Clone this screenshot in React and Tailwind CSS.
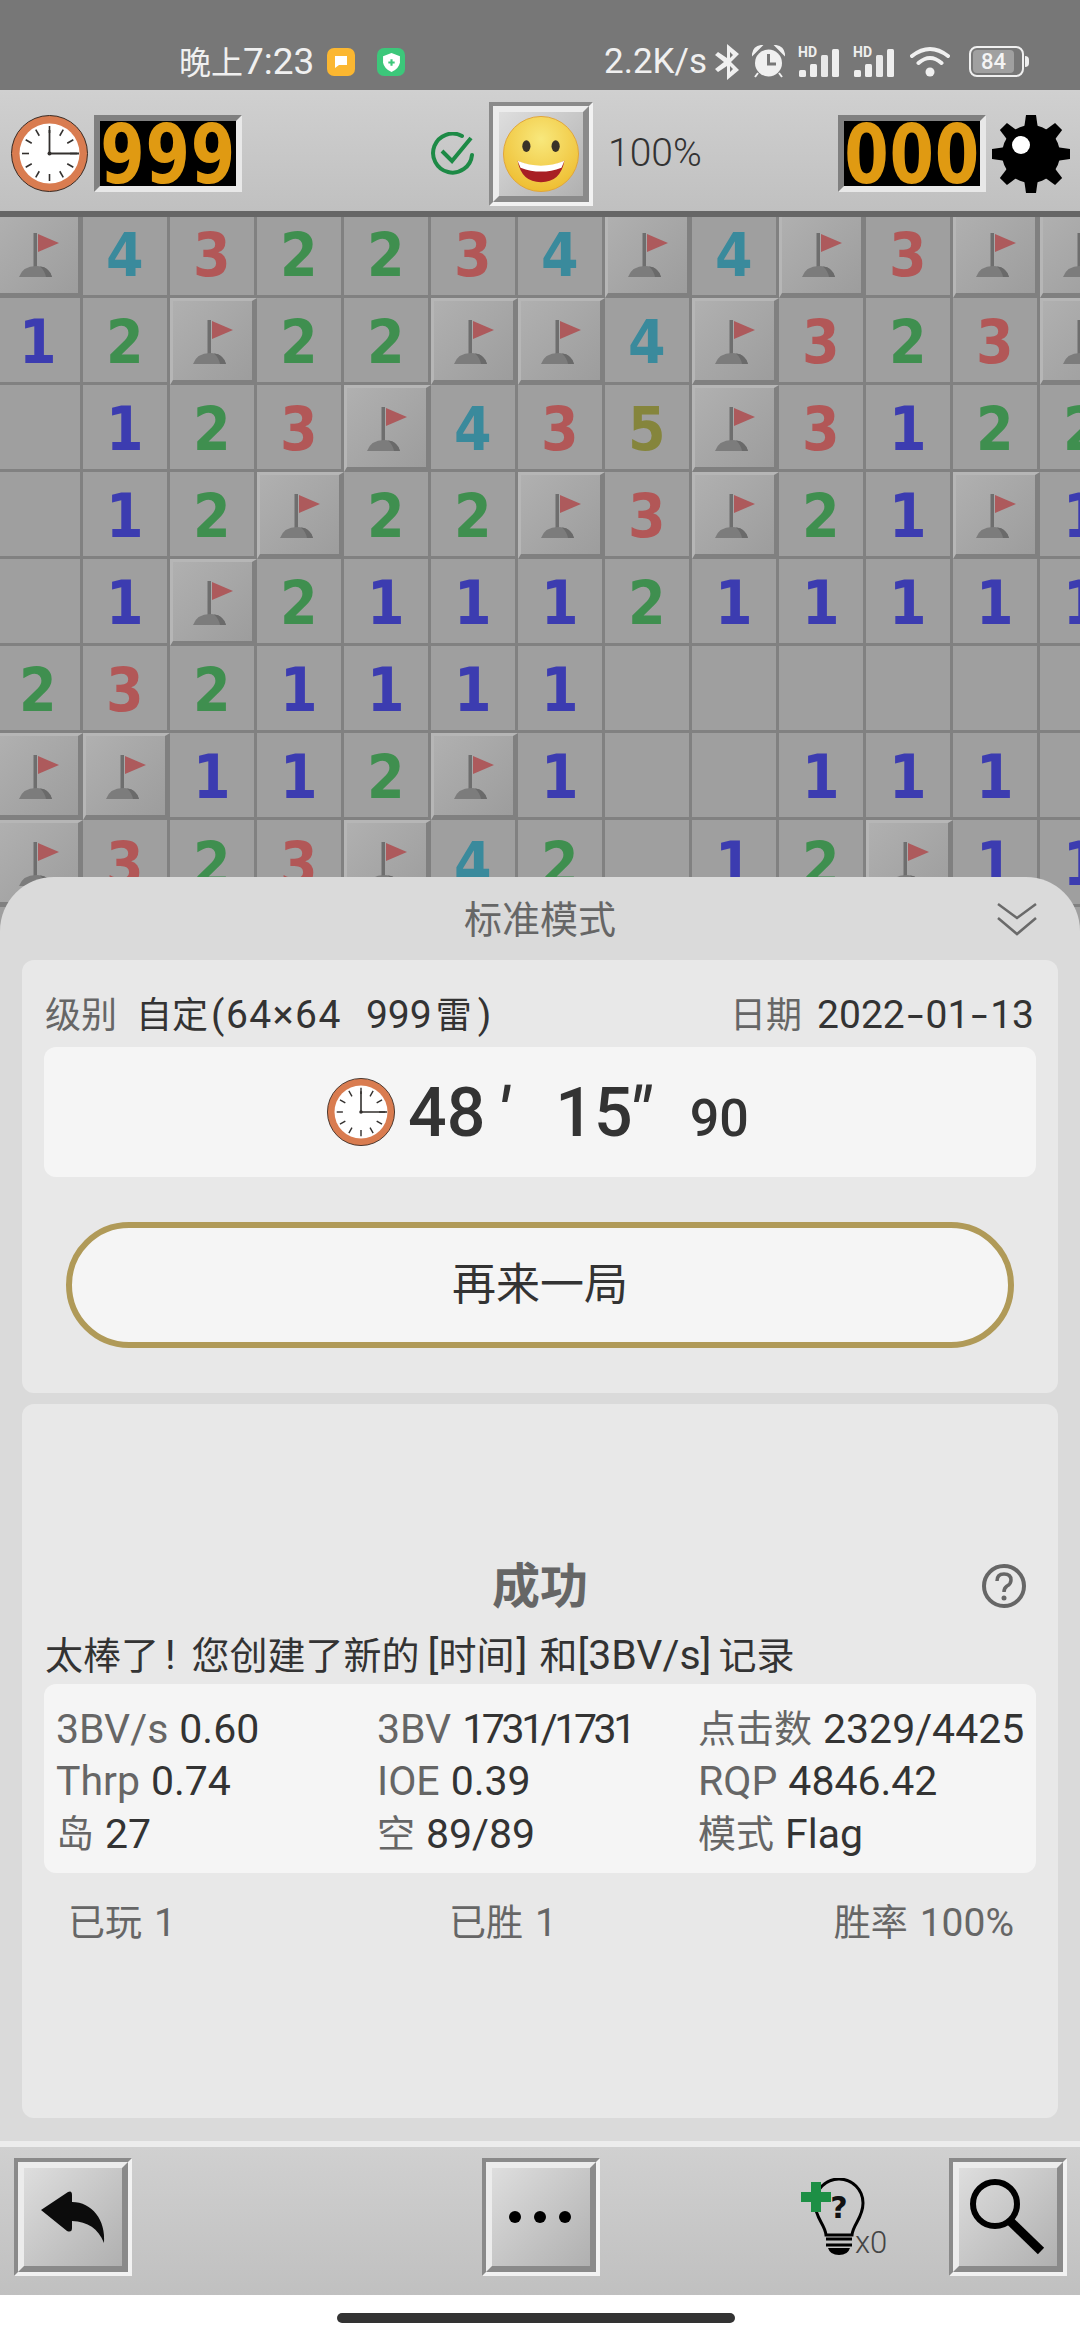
import React from 'react';

const rows = [
  'F432234F4F3FF',
  '12F22FF4F323F',
  ' 123F435F3122',
  ' 12F22F3F21F1',
  ' 1F2111211111',
  '2321111      ',
  'FF112F1  111 ',
  'F323F42 12F11',
  '             ',
];

const numColor = {
  1: 'text-[#3c3cb0]',
  2: 'text-[#3f8f4f]',
  3: 'text-[#b25757]',
  4: 'text-[#3a8a9c]',
  5: 'text-[#85853c]',
};

function Flag() {
  return (
    <svg viewBox="0 0 87 87" className="absolute left-[-3px] top-[-3px] w-[87px] h-[87px]">
      <rect x="37.5" y="22" width="3.5" height="35" fill="#6e6e6e" />
      <path d="M42 23 L63 32 L42 41 Z" fill="#ad5a5c" />
      <path d="M23 66 Q27 55 40 55 Q53 55 56 66 Z" fill="#7c7c7c" />
      <path d="M44 55.5 Q53 56 56 66 H50 Q49 60 44 55.5 Z" fill="#6a6a6a" />
    </svg>
  );
}

function Cell({ v }) {
  if (v === 'F') {
    return (
      <div className="relative w-[87px] h-[87px] bg-gradient-to-br from-[#b0b0b0] to-[#9d9d9d] border-t-[3px] border-l-[3px] border-r-[5px] border-b-[5px] border-t-[#b6b6b6] border-l-[#b6b6b6] border-r-[#808080] border-b-[#808080]">
        <Flag />
      </div>
    );
  }
  return (
    <div className={`w-[87px] h-[87px] pt-[3px] bg-[#9f9f9f] border-r-[3px] border-b-[3px] border-[#818181] flex items-center justify-center font-['DejaVu_Sans',sans-serif] font-bold text-[60px] leading-none ${numColor[v] || ''}`}>
      <span className="scale-x-90">{v === ' ' ? '' : v}</span>
    </div>
  );
}

function Clock({ size }) {
  const ticks = [];
  for (let i = 0; i < 12; i++) {
    ticks.push(<line key={i} x1="38.5" y1="11" x2="38.5" y2="18" stroke="#33302e" strokeWidth="1.6" transform={`rotate(${i * 30} 38.5 38.5)`} />);
  }
  return (
    <svg viewBox="0 0 77 77" style={{ width: size, height: size }} className="shrink-0">
      <circle cx="38.5" cy="38.5" r="38" fill="#d97c50" stroke="#3a2a22" strokeWidth="1" />
      <circle cx="38.5" cy="38.5" r="30" fill="#ffffff" />
      {ticks}
      <path d="M38.5 38.5 V15 M38.5 38.5 H68" stroke="#33302e" strokeWidth="1.8" fill="none" />
      <circle cx="38.5" cy="38.5" r="2" fill="#33302e" />
    </svg>
  );
}

function Lcd({ text }) {
  return (
    <div className="w-[148px] h-[77px] shrink-0 pt-[3px] border-[6px] border-t-[#808080] border-l-[#808080] border-r-[#e8e8e8] border-b-[#e8e8e8] bg-black flex items-center justify-center">
      <span className="scale-x-[0.78] font-['DejaVu_Sans',sans-serif] font-bold text-[82px] leading-none text-[#e09a12] tracking-[1px]">{text}</span>
    </div>
  );
}

function Smile() {
  return (
    <svg viewBox="-40 -40 80 80" className="w-[78px] h-[78px]">
      <defs>
        <radialGradient id="face" cx="50%" cy="30%" r="75%">
          <stop offset="0" stopColor="#f8e87c" />
          <stop offset="1" stopColor="#eebb2c" />
        </radialGradient>
      </defs>
      <circle r="38.5" fill="url(#face)" stroke="#e0a53a" strokeWidth="1" />
      <ellipse cx="-15" cy="-8" rx="4.2" ry="6" fill="#3a3228" />
      <ellipse cx="15" cy="-8" rx="4.2" ry="6" fill="#3a3228" />
      <path d="M-24 7 Q0 19 24 7 Q20 29 0 29 Q-20 29 -24 7 Z" fill="#a81f24" />
      <path d="M-24 7 Q0 17 24 7 L21 14 Q0 22 -21 14 Z" fill="#ffffff" />
    </svg>
  );
}

function Gear() {
  const teeth = [0, 45, 90, 135, 180, 225, 270, 315];
  return (
    <svg viewBox="0 0 78 78" className="w-[78px] h-[78px] shrink-0">
      <circle cx="39" cy="39" r="29" fill="#000" />
      {teeth.map((a) => (
        <path key={a} d="M32 14 L34 0 H44 L46 14 Z" fill="#000" transform={`rotate(${a} 39 39)`} />
      ))}
      <circle cx="29" cy="30" r="9" fill="#fff" />
    </svg>
  );
}

function BevelButton({ size, children }) {
  return (
    <div className={`shrink-0 border-4 border-t-[#8a8a8a] border-l-[#8a8a8a] border-r-[#f2f2f2] border-b-[#f2f2f2] ${size}`}>
      <div className="w-full h-full border-[6px] border-t-[#ececec] border-l-[#ececec] border-r-[#8a8a8a] border-b-[#8a8a8a] bg-gradient-to-br from-[#dedede] to-[#b0b0b0] flex items-center justify-center">
        {children}
      </div>
    </div>
  );
}

function Signal() {
  return (
    <svg viewBox="0 0 42 32" className="w-[42px] h-[32px] overflow-visible">
      <text x="0" y="12" fontSize="14" fontWeight="700" fill="#eeeeee" fontFamily="Roboto, sans-serif">HD</text>
      <rect x="1" y="25" width="7" height="7" rx="1.5" fill="#eeeeee" />
      <rect x="12" y="19" width="7" height="13" rx="1.5" fill="#eeeeee" />
      <rect x="23" y="10" width="7" height="22" rx="1.5" fill="#eeeeee" opacity="0.95" />
      <rect x="34" y="4" width="7" height="28" rx="1.5" fill="#eeeeee" />
    </svg>
  );
}

function StatusBar() {
  return (
    <div className="h-[90px] bg-[#777777] flex items-start pt-[44px] text-[#f0f0f0] font-['Roboto','Noto_Sans_CJK_SC',sans-serif]">
      <span className="ml-[179px] w-[136px] text-[37px] leading-[36px] whitespace-nowrap">
        <span className="text-[32px]">晚上</span>7:23
      </span>
      <div className="ml-[12px] mt-[4px] w-[28px] h-[28px] rounded-[7px] bg-[#fbb731] flex items-center justify-center">
        <svg viewBox="0 0 16 16" className="w-[16px] h-[16px]"><path d="M2 2 H14 V11 H6 L2 14 Z" fill="#fff" /></svg>
      </div>
      <div className="ml-[22px] mt-[4px] w-[28px] h-[28px] rounded-[7px] bg-[#3cc77a] flex items-center justify-center">
        <svg viewBox="0 0 16 18" className="w-[17px] h-[19px]">
          <path d="M8 0 L16 3 V9 Q15 15 8 18 Q1 15 0 9 V3 Z" fill="#fff" />
          <path d="M8 6 V12 M5 9 H11" stroke="#3cc77a" strokeWidth="2" />
        </svg>
      </div>
      <span className="ml-[199px] w-[101px] text-[35px] leading-[36px] whitespace-nowrap">2.2K/s</span>
      <svg viewBox="0 0 25 38" className="ml-[10px] mt-[-1px] w-[25px] h-[38px]">
        <path d="M12 1 L24 11 L16 19 L24 27 L12 37 V23 L3 29 L0 26 L9 19 L0 12 L3 9 L12 15 Z M15 9 V15 L18 12 Z M15 23 V29 L18 26 Z" fill="#f0f0f0" fillRule="evenodd" />
      </svg>
      <svg viewBox="0 0 33 33" className="ml-[12px] mt-[1px] w-[33px] h-[33px]">
        <circle cx="16.5" cy="18" r="13.5" fill="#f0f0f0" />
        <path d="M16.5 9 V19 H24" stroke="#777" strokeWidth="3" fill="none" />
        <path d="M1 9 Q2 2 9 1 Z M32 9 Q31 2 24 1 Z M6 28 L3 32 M27 28 L30 32" stroke="#f0f0f0" strokeWidth="2" fill="#f0f0f0" />
      </svg>
      <div className="ml-[13px] mt-[1px]"><Signal /></div>
      <div className="ml-[13px] mt-[1px]"><Signal /></div>
      <svg viewBox="0 0 40 31" className="ml-[15px] mt-[2px] w-[40px] h-[31px]">
        <path d="M2 10 Q20 -4 38 10 M8.5 17 Q20 7 31.5 17" stroke="#f0f0f0" strokeWidth="4" fill="none" strokeLinecap="round" />
        <circle cx="20" cy="26" r="4.5" fill="#f0f0f0" />
      </svg>
      <div className="ml-[19px] mt-[2px] flex items-center">
        <div className="w-[55px] h-[31px] rounded-[8px] border-2 border-[#f0f0f0] p-[2px]">
          <div className="w-[41px] h-full rounded-[4px] bg-[#a0a0a0] flex items-center justify-center text-[22px] leading-none font-medium text-[#f4f4f4]">84</div>
        </div>
        <div className="ml-[1px] w-[4px] h-[11px] rounded-r-full bg-[#f0f0f0]" />
      </div>
    </div>
  );
}

function TopBar() {
  return (
    <div className="h-[127px] pt-[6px] border-b-[6px] border-[#666666] bg-gradient-to-b from-[#d0d0d0] to-[#c0c0c0] flex items-center">
      <div className="ml-[11px]"><Clock size={77} /></div>
      <div className="ml-[6px]"><Lcd text="999" /></div>
      <svg viewBox="0 0 44 44" className="ml-[189px] w-[44px] h-[44px]">
        <path d="M31 4 A19.5 19.5 0 1 0 41 23" stroke="#1d8a46" strokeWidth="4" fill="none" strokeLinecap="round" />
        <path d="M11 19 L21 29 L40 6" stroke="#1d8a46" strokeWidth="4" fill="none" />
      </svg>
      <div className="ml-[14px]">
        <BevelButton size="w-[104px] h-[104px]"><Smile /></BevelButton>
      </div>
      <span className="ml-[15px] text-[39px] leading-none text-[#333333] font-['Roboto',sans-serif] font-light">100%</span>
      <div className="ml-auto"><Lcd text="000" /></div>
      <div className="ml-[6px] mr-[10px]"><Gear /></div>
    </div>
  );
}

function Board() {
  return (
    <div className="h-[720px] overflow-hidden bg-[#9f9f9f]">
      <div className="ml-[-4px] mt-[-6px] grid grid-cols-[repeat(13,87px)] auto-rows-[87px] w-[1131px]">
        {rows.map((row, r) => row.split('').map((v, c) => <Cell key={`${r}-${c}`} v={v} />))}
      </div>
    </div>
  );
}

function Stat({ label, cjk, value, tight }) {
  return (
    <div className="h-[52.5px] flex items-center whitespace-nowrap">
      <span className={cjk ? 'text-[38px] text-[#666666]' : 'text-[#666666]'}>{label}</span>
      <span className={tight ? 'ml-[11px] text-[#333333] tracking-[-3.4px]' : 'ml-[11px] text-[#333333]'}>{value}</span>
    </div>
  );
}

function Sheet() {
  return (
    <div className="relative -mt-[60px] h-[1264px] rounded-t-[54px] bg-[#dadada] px-[22px] font-['Roboto','Noto_Sans_CJK_SC',sans-serif]">
      <div className="h-[83px] pt-[3px] flex items-center justify-center text-[38px] text-[#666666]">标准模式</div>
      <svg viewBox="0 0 40 34" className="absolute right-[43px] top-[25px] w-[40px] h-[34px]">
        <path d="M1 2 L20 16 L39 2 M1 16 L20 32 L39 16" stroke="#6a6a6a" strokeWidth="2.5" fill="none" />
      </svg>

      <div className="h-[433px] rounded-xl bg-[#e8e8e8]">
        <div className="h-[87px] pt-[24px] pl-[23px] pr-[24px] flex items-center justify-between text-[39px] text-[#333333] whitespace-pre">
          <div className="flex items-center">
            <span className="text-[36px] text-[#666666]">级别</span>
            <span className="ml-[19px] text-[36px]">自定</span>
            <span className="ml-[3px] tracking-[1.5px]">(64×64</span>
            <span className="ml-[24px]">999</span>
            <span className="ml-[4px] text-[36px]">雷</span>
            <span className="ml-[6px]">)</span>
          </div>
          <div className="flex items-center">
            <span className="text-[36px] text-[#666666]">日期</span>
            <span className="ml-[15px]">2022</span>
            <span className="mx-[5px] scale-x-150">-</span>
            <span>01</span>
            <span className="mx-[5px] scale-x-150">-</span>
            <span>13</span>
          </div>
        </div>
        <div className="mx-[22px] h-[130px] rounded-xl bg-[#f5f5f5] flex items-center pl-[283px] text-[#333333] font-medium whitespace-pre">
          <Clock size={68} />
          <div className="flex items-baseline pt-[2px]">
            <span className="ml-[13px] text-[68px] leading-none">48</span>
            <span className="ml-[12px] text-[68px] leading-none italic">{'′'}</span>
            <span className="ml-[47px] text-[68px] leading-none">15</span>
            <span className="ml-[-4px] text-[68px] leading-none italic">{'″'}</span>
            <span className="ml-[40px] text-[52px] leading-none">90</span>
          </div>
        </div>
        <div className="mx-[44px] mt-[45px] h-[126px] rounded-full border-[6px] border-[#b09a58] bg-[#f5f5f5] flex items-center justify-center text-[44px] text-[#333333]">
          再来一局
        </div>
      </div>

      <div className="mt-[11px] h-[714px] rounded-xl bg-[#e8e8e8] pt-[157px]">
        <div className="relative h-[52px] flex items-center justify-center text-[48px] font-bold text-[#666666]">
          成功
          <svg viewBox="0 0 44 44" className="absolute right-[32px] top-[3px] w-[44px] h-[44px]">
            <circle cx="22" cy="22" r="20" stroke="#666666" strokeWidth="4" fill="none" />
            <path d="M15 17 Q15 10 22 10 Q29 10 29 16 Q29 20 25 22 Q22 24 22 28" stroke="#666666" strokeWidth="3.5" fill="none" />
            <circle cx="22" cy="34" r="2.5" fill="#666666" />
          </svg>
        </div>
        <div className="mt-[15px] h-[56px] pl-[23px] flex items-center text-[38px] text-[#333333] whitespace-pre">
          <span>太棒了</span>
          <span className="text-[41px] ml-[6px]">!</span>
          <span className="ml-[16px]">您创建了新的</span>
          <span className="text-[41px] ml-[8px]">[</span>
          <span>时间</span>
          <span className="text-[41px] ml-[2px]">]</span>
          <span className="ml-[12px]">和</span>
          <span className="text-[41px]">[3BV/s]</span>
          <span className="ml-[7px]">记录</span>
        </div>
        <div className="mx-[22px] h-[189px] rounded-xl bg-[#f5f5f5] pt-[19px] pl-[12px] grid grid-cols-[321px_321px_1fr] auto-rows-[52.5px] text-[41px]">
          <Stat label="3BV/s" value="0.60" />
          <Stat label="3BV" value="1731/1731" tight />
          <Stat label="点击数" cjk value="2329/4425" />
          <Stat label="Thrp" value="0.74" />
          <Stat label="IOE" value="0.39" />
          <Stat label="RQP" value="4846.42" />
          <Stat label="岛" cjk value="27" />
          <Stat label="空" cjk value="89/89" />
          <Stat label="模式" cjk value="Flag" />
        </div>
        <div className="mt-[25px] h-[50px] pl-[46px] pr-[44px] flex items-center text-[37px] text-[#666666]">
          <span className="w-[381px]">已玩<span className="ml-[12px] text-[39px]">1</span></span>
          <span>已胜<span className="ml-[12px] text-[39px]">1</span></span>
          <span className="ml-auto">胜率<span className="ml-[12px] text-[39px]">100%</span></span>
        </div>
      </div>
    </div>
  );
}

function BottomBar() {
  return (
    <div className="h-[154px] pb-[8px] border-t-[6px] border-[#ececec] bg-gradient-to-b from-[#d0d0d0] to-[#c0c0c0] flex items-center">
      <div className="ml-[14px]">
        <BevelButton size="w-[118px] h-[118px]">
          <svg viewBox="0 0 98 98" className="w-[98px] h-[98px]">
            <path d="M17 42 L44 24 Q48 22 48 27 L48 34 C68 34 82 52 80 75 C74 60 64 54 48 53 L48 60 Q48 65 43 63 Z" fill="#0c0c0c" />
          </svg>
        </BevelButton>
      </div>
      <div className="ml-[350px]">
        <BevelButton size="w-[118px] h-[118px]">
          <svg viewBox="0 0 98 98" className="w-[98px] h-[98px]">
            <circle cx="23" cy="49" r="6" fill="#000" />
            <circle cx="48" cy="49" r="6" fill="#000" />
            <circle cx="73" cy="49" r="6" fill="#000" />
          </svg>
        </BevelButton>
      </div>
      <div className="relative ml-[201px] w-[90px] h-[78px]">
        <svg viewBox="0 0 64 78" className="w-[64px] h-[78px]">
          <path d="M25 57 C24 46 14 40 14 25 A24 24 0 0 1 62 25 C62 40 52 46 51 57 Z" stroke="#000" strokeWidth="3" fill="none" />
          <path d="M25 61 H51 M25 67 H51" stroke="#000" strokeWidth="3" />
          <path d="M27 70 H49 Q47 77 38 77 Q29 77 27 70 Z" fill="#000" />
          <text x="38" y="40" textAnchor="middle" fontSize="30" fontWeight="700" fill="#111" fontFamily="DejaVu Sans, sans-serif">?</text>
          <path d="M10 4 H20 V14 H30 V24 H20 V34 H10 V24 H0 V14 H10 Z" fill="#1d8f45" />
        </svg>
        <span className="absolute left-[54px] bottom-[-2px] text-[31px] leading-none text-[#444444] font-['Roboto',sans-serif] font-light">x0</span>
      </div>
      <div className="ml-[58px]">
        <BevelButton size="w-[118px] h-[118px]">
          <svg viewBox="0 0 98 98" className="w-[98px] h-[98px]">
            <circle cx="36" cy="36" r="22" stroke="#000" strokeWidth="6" fill="none" />
            <path d="M50 52 L82 83" stroke="#000" strokeWidth="9" />
          </svg>
        </BevelButton>
      </div>
    </div>
  );
}

export default function App() {
  return (
    <div className="w-[1080px] h-[2340px] overflow-hidden bg-white flex flex-col">
      <StatusBar />
      <TopBar />
      <Board />
      <Sheet />
      <BottomBar />
      <div className="mt-[18px] ml-[337px] w-[398px] h-[10px] rounded-full bg-[#333333]" />
    </div>
  );
}
